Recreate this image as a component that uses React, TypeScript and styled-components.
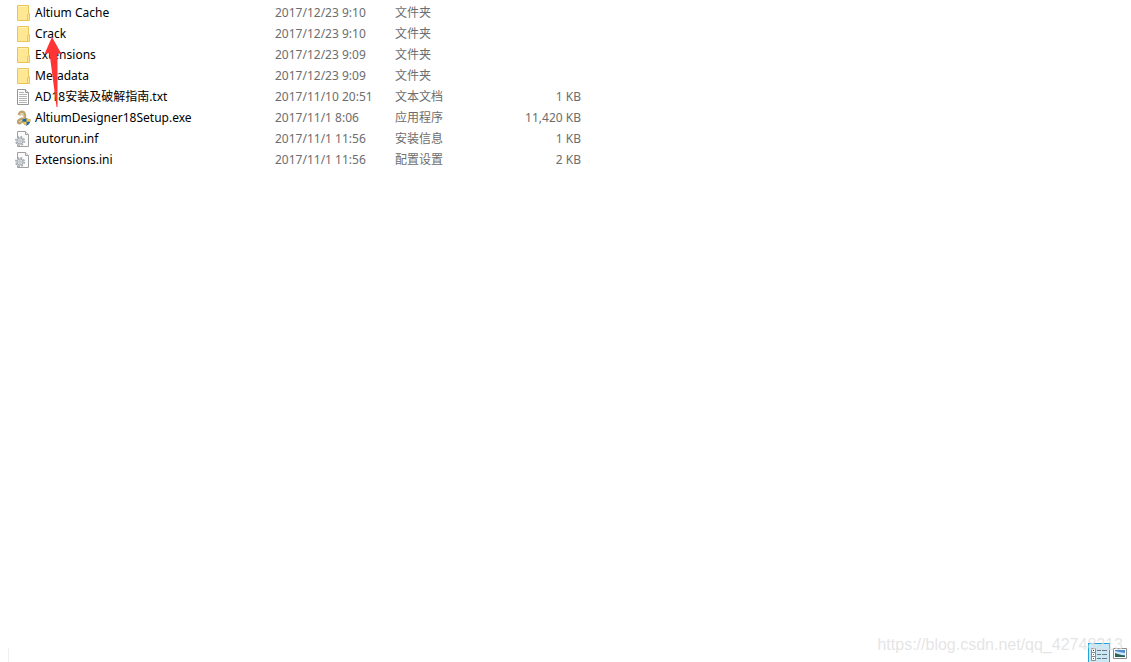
import React from "react";
import styled, { createGlobalStyle } from "styled-components";

const GlobalStyle = createGlobalStyle`
  * { box-sizing: border-box; }
  body {
    margin: 0;
    background: #fff;
    font-family: "Noto Sans", "Noto Sans CJK SC", sans-serif;
    font-size: 12px;
    line-height: 20px;
    color: #000;
  }
`;

const Explorer = styled.div`
  position: relative;
  display: flex;
  flex-direction: column;
  min-height: 100vh;
`;

const Files = styled.main`
  flex: 1;
  padding: 2px 15px 0;
`;

const FileTable = styled.table`
  width: 566px;
  max-width: 100%;
  table-layout: fixed;
  border-collapse: collapse;
`;

const Column = styled.col<{ $width?: number }>`
  width: ${(p) => (p.$width ? `${p.$width}px` : "auto")};
`;

const Row = styled.tr`
  height: 21px;
`;

const Cell = styled.td<{ $align?: "right" }>`
  padding: 0;
  color: #6d6d6d;
  white-space: nowrap;
  text-align: ${(p) => p.$align ?? "left"};
`;

const NameCell = styled(Cell)`
  color: #000;
`;

const FileName = styled.span`
  display: flex;
  align-items: center;
  gap: 4px;
`;

const Icon = styled.svg`
  display: block;
  flex: none;
  width: 16px;
  height: 16px;
`;

const Arrow = styled.svg`
  position: absolute;
  left: 43px;
  top: 36px;
  width: 20px;
  height: 72px;
  pointer-events: none;
`;

const StatusBar = styled.footer`
  display: flex;
  align-items: flex-end;
  justify-content: space-between;
  height: 19px;
  padding: 0 1px 0 8px;
`;

const Divider = styled.span`
  width: 1px;
  height: 14px;
  background: #f0f0f0;
`;

const ViewModes = styled.div`
  display: flex;
`;

const ViewButton = styled.button<{ $active?: boolean }>`
  display: flex;
  justify-content: center;
  width: ${(p) => (p.$active ? 22 : 20)}px;
  height: 19px;
  padding: 3px 0 0;
  border: 1px solid ${(p) => (p.$active ? "#26a0da" : "transparent")};
  border-bottom: 0;
  background: ${(p) => (p.$active ? "#cbe8f6" : "transparent")};
`;

const Watermark = styled.span`
  position: absolute;
  right: 8px;
  bottom: 7px;
  font: 16px/20px "Liberation Sans", Arial, sans-serif;
  color: rgba(222, 222, 222, 0.8);
  pointer-events: none;
`;

type Kind = "folder" | "text" | "setup" | "config";

const FolderIcon = () => (
  <Icon viewBox="0 0 16 16" aria-hidden="true">
    <path d="M2.5.5h11v8h1v7h-12z" fill="#ffe793" stroke="#e8c555" />
    <path d="M12.500 15V9.500h1" fill="none" stroke="#e8c555" />
    <path d="M3 1h10v1H3z" fill="#fff0b5" />
  </Icon>
);

const TextIcon = () => (
  <Icon viewBox="0 0 16 16" aria-hidden="true">
    <path d="M2.5.5h8l3 3v12h-11z" fill="#fff" stroke="#959595" />
    <path d="M10.5.5v3h3" fill="#eee" stroke="#959595" />
    <path d="M4 3.5h5M4 5.5h8M4 7.5h8M4 9.5h8M4 11.5h8M4 13.5h8" stroke="#b4b4b4" />
  </Icon>
);

const SetupIcon = () => (
  <Icon viewBox="0 0 16 16" aria-hidden="true">
    <path
      d="M4 4C4.800 1.300 8.500 1 9.500 3.300c1 2.600.8 5-1.300 7.400-1.700 2-4.700 3.700-5.200 1.600-.4-2 3-3.800 6-3.800"
      fill="none"
      stroke="#bda46c"
      strokeWidth="2.400"
      strokeLinecap="round"
    />
    <path d="M4.500 5.500C6 3.500 8 4 9 6.500" fill="none" stroke="#d9c594" strokeWidth="1.500" />
    <path d="M11.500 8c1.200.9 2.500 1.200 4 1.200 0 3.200-1.200 5.300-4 6.500-2.800-1.200-4-3.300-4-6.500 1.500 0 2.800-.3 4-1.200z" fill="#1668b8" />
    <path d="M11.500 8c1.200.9 2.500 1.200 4 1.200l-.2 2.600h-3.800zM11.500 11.800v3.900c-2-.9-3.200-2.100-3.700-3.900z" fill="#fcc737" />
  </Icon>
);

const ConfigIcon = () => (
  <Icon viewBox="0 0 16 16" aria-hidden="true">
    <path d="M2.5.5h8l3 3v12h-11z" fill="#fafafa" stroke="#a0a0a0" />
    <path d="M10.5.5v3h3" fill="#eee" stroke="#a0a0a0" />
    <circle cx="5" cy="10" r="4.300" fill="#f3f5f6" stroke="#9aa1a8" strokeWidth="1.300" strokeDasharray="1.800 1.580" />
    <circle cx="5" cy="10" r="3.100" fill="#e4e8eb" stroke="#9aa1a8" />
    <circle cx="5" cy="10" r="1.200" fill="#fff" stroke="#9aa1a8" strokeWidth=".8" />
  </Icon>
);

const icons: Record<Kind, React.FC> = {
  folder: FolderIcon,
  text: TextIcon,
  setup: SetupIcon,
  config: ConfigIcon,
};

const files: { kind: Kind; name: string; date: string; type: string; size: string }[] = [
  { kind: "folder", name: "Altium Cache", date: "2017/12/23 9:10", type: "文件夹", size: "" },
  { kind: "folder", name: "Crack", date: "2017/12/23 9:10", type: "文件夹", size: "" },
  { kind: "folder", name: "Extensions", date: "2017/12/23 9:09", type: "文件夹", size: "" },
  { kind: "folder", name: "Metadata", date: "2017/12/23 9:09", type: "文件夹", size: "" },
  { kind: "text", name: "AD18安装及破解指南.txt", date: "2017/11/10 20:51", type: "文本文档", size: "1 KB" },
  { kind: "setup", name: "AltiumDesigner18Setup.exe", date: "2017/11/1 8:06", type: "应用程序", size: "11,420 KB" },
  { kind: "config", name: "autorun.inf", date: "2017/11/1 11:56", type: "安装信息", size: "1 KB" },
  { kind: "config", name: "Extensions.ini", date: "2017/11/1 11:56", type: "配置设置", size: "2 KB" },
];

export default function App() {
  return (
    <Explorer lang="zh-CN">
      <GlobalStyle />
      <Files>
        <FileTable>
          <colgroup>
            <Column $width={260} />
            <Column $width={120} />
            <Column $width={90} />
            <Column />
          </colgroup>
          <tbody>
            {files.map((file) => {
              const FileIcon = icons[file.kind];
              return (
                <Row key={file.name}>
                  <NameCell>
                    <FileName>
                      <FileIcon />
                      {file.name}
                    </FileName>
                  </NameCell>
                  <Cell>{file.date}</Cell>
                  <Cell>{file.type}</Cell>
                  <Cell $align="right">{file.size}</Cell>
                </Row>
              );
            })}
          </tbody>
        </FileTable>
      </Files>
      <Arrow viewBox="0 0 20 72" aria-hidden="true">
        <path d="M9 1L18.500 18 14.500 17.500 14.500 71H13.500L6.500 17 1.500 18z" fill="#ff3535" />
      </Arrow>
      <StatusBar>
        <Divider />
        <ViewModes>
          <ViewButton $active type="button" aria-label="详细信息">
            <Icon viewBox="0 0 16 16" aria-hidden="true">
              <path d="M.5 1.500h4v12h-4zM.5 5.500h4M.5 9.500h4" fill="#fff" stroke="#8c8c8c" />
              <path d="M2 3h1v1H2z" fill="#333" />
              <path d="M2 7h1v1H2z" fill="#2a7fd0" />
              <path d="M2 11h1v1H2z" fill="#c22" />
              <path d="M6 3.500h4M11 3.500h5M6 7.500h4M11 7.500h5M6 11.500h4M11 11.500h5" stroke="#6f7a80" />
            </Icon>
          </ViewButton>
          <ViewButton type="button" aria-label="大图标">
            <Icon viewBox="0 0 16 16" aria-hidden="true">
              <path d="M1.500 1.500h13v10h-13z" fill="#fff" stroke="#8c8c8c" />
              <path d="M3 3h10v7H3z" fill="#4c8fd8" />
              <path d="M3 4l4 1 6 1v2H3z" fill="#cfe6f6" />
              <path d="M3 6l3 1 7 2v1H3z" fill="#2e6357" />
            </Icon>
          </ViewButton>
        </ViewModes>
      </StatusBar>
      <Watermark>https://blog.csdn.net/qq_42748213</Watermark>
    </Explorer>
  );
}
